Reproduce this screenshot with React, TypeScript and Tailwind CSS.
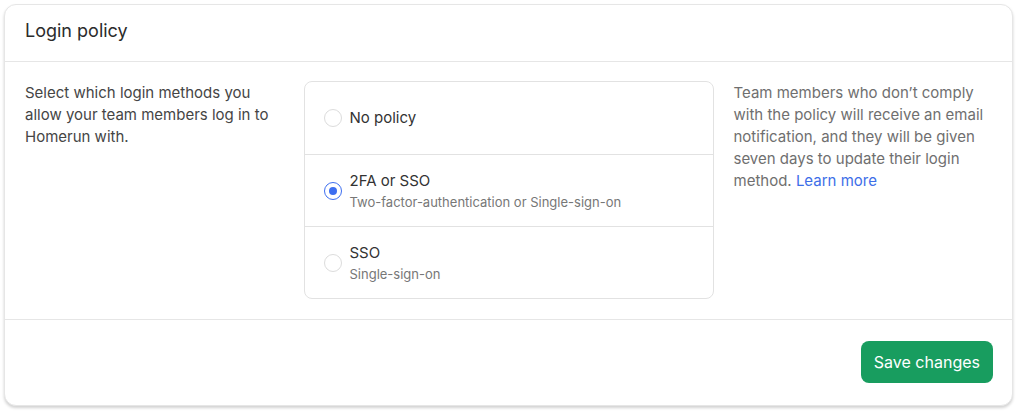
const options = [
  { id: "none", title: "No policy", sub: null },
  { id: "2fa", title: "2FA or SSO", sub: "Two-factor-authentication or Single-sign-on" },
  { id: "sso", title: "SSO", sub: "Single-sign-on" },
];

function Radio({ checked }: { checked: boolean }) {
  return (
    <span
      className={
        checked
          ? "flex size-[18px] shrink-0 items-center justify-center rounded-full border border-[#3d6ef0] bg-white"
          : "flex size-[18px] shrink-0 rounded-full border border-[#dcdcdc] bg-white"
      }
    >
      {checked ? <span className="size-2 rounded-full bg-[#3d6ef0]" /> : null}
    </span>
  );
}

export default function App() {
  const selected = "2fa";
  return (
    <div className="bg-white p-1 pb-2 font-['Inter',sans-serif]">
      <div className="overflow-hidden rounded-xl border border-[#e6e6e6] bg-white shadow-[0_2px_3px_rgba(0,0,0,0.18)]">
        <div className="border-b border-[#e6e6e6] px-5 pb-4 pt-3">
          <h2 className="text-[18px] leading-[28px] text-[#2b2b2b]">Login policy</h2>
        </div>
        <div className="grid grid-cols-[1fr_410px_1fr] gap-5 border-b border-[#e6e6e6] px-5 pb-5 pt-[19px]">
          <p className="pt-[1px] text-[15px] leading-[22px] text-[#454545]">
            Select which login methods you allow your team members log in to Homerun with.
          </p>
          <div className="flex flex-col rounded-lg border border-[#e2e2e2]">
            {options.map((o, i) => (
              <div
                key={o.id}
                className={
                  i > 0
                    ? "flex h-[72px] items-center gap-[8px] border-t border-[#e2e2e2] px-[19px]"
                    : "flex h-[72px] items-center gap-[8px] px-[19px]"
                }
              >
                <Radio checked={o.id === selected} />
                <div className="flex flex-col">
                  <span className="text-[15px] leading-[22px] text-[#333]">{o.title}</span>
                  {o.sub ? (
                    <span className="text-[13px] leading-[20px] text-[#777]">{o.sub}</span>
                  ) : null}
                </div>
              </div>
            ))}
          </div>
          <p className="pt-[1px] text-[15px] leading-[22px] text-[#6f6f6f]">
            Team members who don’t comply with the policy will receive an email notification, and they will be given seven days to update their login method.{" "}
            <a className="text-[#3d6ee8]">Learn more</a>
          </p>
        </div>
        <div className="flex justify-end pb-[22px] pl-5 pr-[19px] pt-[21px]">
          <button
            type="button"
            className="h-[42px] rounded-lg bg-[#189d5f] px-[13px] text-[16px] text-white"
          >
            Save changes
          </button>
        </div>
      </div>
    </div>
  );
}
